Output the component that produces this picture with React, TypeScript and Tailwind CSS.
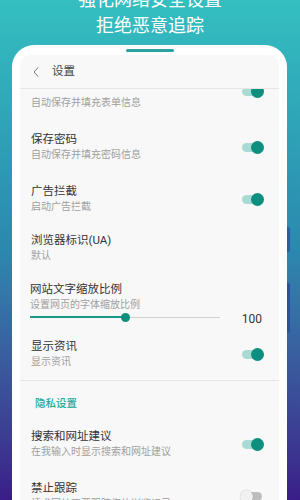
import React from 'react';

const FONT = "font-['Roboto','Noto_Sans_CJK_SC',sans-serif]";

function Toggle({ on }: { on: boolean }) {
  return (
    <div className="relative w-[24px] h-[14px] shrink-0">
      <div
        className={`absolute left-[2px] right-[2px] top-[2.5px] h-[9px] rounded-full ${
          on ? 'bg-[#a9dbd5]' : 'bg-[#bdbdbd]'
        }`}
      />
      <div
        className={`absolute top-[0.5px] w-[13px] h-[13px] rounded-full ${
          on ? 'right-0 bg-[#0d8f7f]' : 'left-0 bg-[#f1f1f1] shadow-[0_0_1px_rgba(0,0,0,0.3)]'
        }`}
      />
    </div>
  );
}

function Row({
  title,
  sub,
  on,
  h = 'h-[52px]',
  toggleClass = '',
}: {
  title: string;
  sub: string;
  on?: boolean;
  h?: string;
  toggleClass?: string;
}) {
  return (
    <div className={`flex items-center ${h} pl-[11px] pr-[15px]`}>
      <div className="flex flex-col">
        <span className="h-[15px] text-[11.5px] leading-[15px] text-[#333]">{title}</span>
        <span className="text-[10px] leading-[15px] text-[#a0a0a0]">{sub}</span>
      </div>
      {on !== undefined && (
        <div className={`ml-auto ${toggleClass}`}>
          <Toggle on={on} />
        </div>
      )}
    </div>
  );
}

export default function App() {
  return (
    <div
      className={`w-[300px] h-[500px] overflow-hidden bg-gradient-to-b from-[#34bfc0] via-[#2b88ae] to-[#3a1c88] ${FONT}`}
    >
      {/* Headline */}
      <div className="-mt-[13px] flex flex-col items-center text-white text-[18px] leading-[26px]">
        <span>强化网络安全设置</span>
        <span>拒绝恶意追踪</span>
      </div>

      {/* Phone frame */}
      <div className="relative mt-[6px] ml-[12px] w-[275px] h-[500px] rounded-t-[22px] bg-white px-[8px] pt-[4px]">
        <div className="absolute right-[-3px] top-[182px] w-[3px] h-[25px] rounded-r-[2px] bg-[#2a5f9e]" />
        <div className="absolute right-[-3px] top-[238px] w-[3px] h-[50px] rounded-r-[2px] bg-[#2a559a]" />

        <div className="mx-auto w-[48px] h-[3px] rounded-full bg-[#2aa3a5]" />

        <div className="mt-[3px] h-[445px] rounded-t-[10px] bg-[#f8f8f8] overflow-hidden flex flex-col">
          {/* Header */}
          <div className="h-[34px] shrink-0 flex items-center border-b border-[#e6e6e6] pl-[13px]">
            <svg width="6" height="10" viewBox="0 0 6 10" className="mr-[13px]">
              <path d="M5 0.5 L1 5 L5 9.5" fill="none" stroke="#777" strokeWidth="1" />
            </svg>
            <span className="text-[11.5px] text-[#444]">设置</span>
          </div>

          {/* List, scrolled so the first row sits under the header */}
          <div className="flex-1 overflow-hidden">
            <div className="-mt-[20px]">
              <Row title="" sub="自动保存并填充表单信息" on toggleClass="-mt-[8px]" />
              <Row title="保存密码" sub="自动保存并填充密码信息" on />
              <Row title="广告拦截" sub="启动广告拦截" on />
              <Row title="浏览器标识(UA)" sub="默认" h="h-[46px]" />

              <div className="pl-[10px] pr-[17px] pt-[11px] pb-[6px]">
                <div className="flex flex-col">
                  <span className="text-[11.5px] leading-[15px] text-[#333]">网站文字缩放比例</span>
                  <span className="text-[10px] leading-[15px] text-[#a0a0a0]">设置网页的字体缩放比例</span>
                </div>
                <div className="flex items-center h-[10px]">
                  <div className="relative w-[190px] h-[1px] bg-[#d0d0d0]">
                    <div className="absolute left-0 top-[-0.5px] h-[2px] w-[95px] bg-[#1a9988]" />
                    <div className="absolute left-[90.5px] top-[-4px] w-[9px] h-[9px] rounded-full bg-[#0d8f7f]" />
                  </div>
                  <span className="ml-auto mt-[3px] text-[12px] text-[#333]">100</span>
                </div>
              </div>

              <Row title="显示资讯" sub="显示资讯" on />

              <div className="h-px bg-[#e6e6e6]" />

              <div className="h-[37px] flex items-end pb-[7px] pl-[15px]">
                <span className="text-[10.5px] leading-[15px] text-[#26a69a] font-medium">隐私设置</span>
              </div>

              <Row title="搜索和网址建议" sub="在我输入时显示搜索和网址建议" on />
              <Row title="禁止跟踪" sub="请求网站不要跟踪您的浏览记录" on={false} />
            </div>
          </div>
        </div>
      </div>
    </div>
  );
}
